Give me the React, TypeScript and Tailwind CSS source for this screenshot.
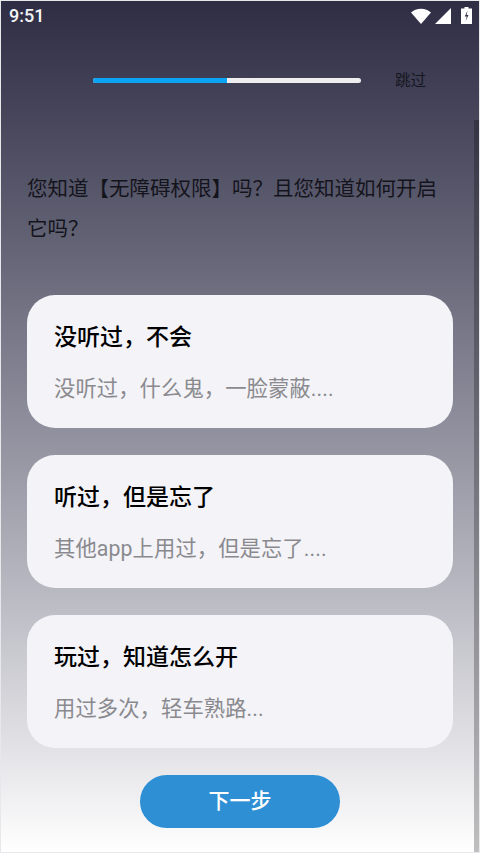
import { Fragment } from 'react';

const options = [
  { title: '没听过，不会', desc: '没听过，什么鬼，一脸蒙蔽....' },
  { title: '听过，但是忘了', desc: '其他app上用过，但是忘了....' },
  { title: '玩过，知道怎么开', desc: '用过多次，轻车熟路...' },
];

const cjk = "font-['Roboto','Noto_Sans_CJK_SC',sans-serif]";

function StatusIcons() {
  return (
    <div className="flex items-center gap-[3px]">
      <svg width="20" height="16" viewBox="0 0 20 16" fill="white">
        <path d="M0 4.5C2.6 2 6 .7 10 .7s7.4 1.3 10 3.8L10 16z" />
      </svg>
      <svg width="16" height="16" viewBox="0 0 16 16" fill="white" className="ml-[1px]">
        <path d="M16 0v16H0z" />
      </svg>
      <svg width="11" height="17" viewBox="0 0 11 17" className="ml-[7px]">
        <path d="M3.5 0h4v1.5H11V17H0V1.5h3.5z" fill="white" />
        <path d="M6.5 3.5 3.8 9.5h2l-1.2 4.8 2.9-6.3H5.6z" fill="#2f2e45" />
      </svg>
    </div>
  );
}

export default function App() {
  return (
    <div className={`relative flex h-[853px] w-[480px] flex-col overflow-hidden bg-gradient-to-b from-[#2e2d44] to-white shadow-[inset_0_0_0_1px_#e8e8ec] ${cjk}`}>
      <div className="flex h-[31px] items-center justify-between pl-[9px] pr-[8px]">
        <span className="text-[18px] font-medium text-[#f4f4f6]">9:51</span>
        <StatusIcons />
      </div>

      <div className="mt-[34px] flex h-[30px] items-center pl-[93px]">
        <div className="flex h-[5px] w-[268px] overflow-hidden rounded-full bg-[#eeeef0]">
          <div className="h-full w-1/2 bg-[#0ba4f4]" />
        </div>
        <span className="ml-[34px] mt-[3px] text-[15.5px] text-[#16161f]">跳过</span>
      </div>

      <p className="mt-[74px] w-[426px] self-center text-[20.5px] leading-[40px] text-[#14141c]">
        您知道【无障碍权限】吗？且您知道如何开启它吗？
      </p>

      <div className="mt-[46px] flex flex-col gap-[27px] px-[27px]">
        {options.map((o) => (
          <Fragment key={o.title}>
            <div className="flex h-[133px] flex-col rounded-[28px] bg-[#f3f3f8] px-[27px] pt-[28px]">
              <div className="text-[23px] font-medium leading-[30px] text-black">{o.title}</div>
              <div className="mt-[21px] text-[21.3px] leading-[30px] tracking-[0.1px] text-[#8a8a8e]">{o.desc}</div>
            </div>
          </Fragment>
        ))}
      </div>

      <button className="mt-[27px] h-[53px] w-[200px] self-center rounded-full bg-[#2e8fd5] text-[21px] font-medium text-white">
        下一步
      </button>

      {/* scrollbar */}
      <div className="absolute right-[1px] top-[120px] h-[732px] w-[5px] bg-black/25" />
    </div>
  );
}
